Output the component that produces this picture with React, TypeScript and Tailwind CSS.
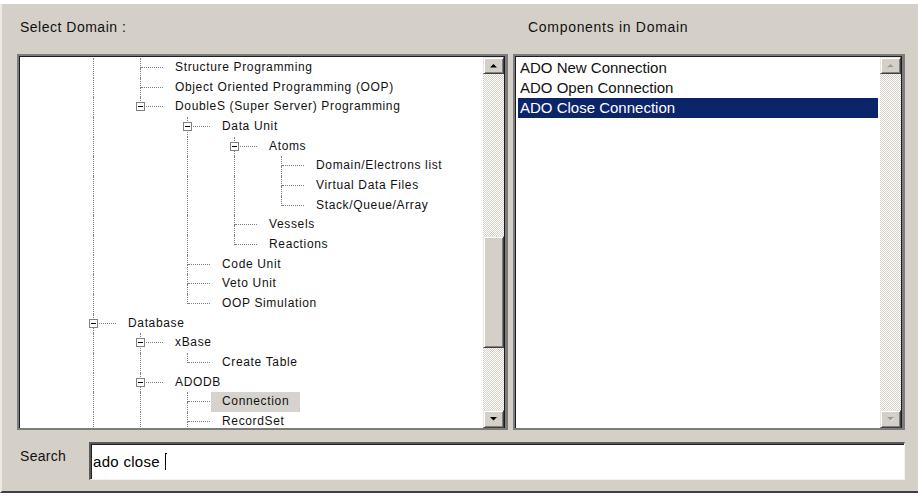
type Row = { t: string; l: number; box?: boolean; sel?: boolean };

const rows: Row[] = [
  { t: 'Structure Programming', l: 1 },
  { t: 'Object Oriented Programming (OOP)', l: 1 },
  { t: 'DoubleS (Super Server) Programming', l: 1, box: true },
  { t: 'Data Unit', l: 2, box: true },
  { t: 'Atoms', l: 3, box: true },
  { t: 'Domain/Electrons list', l: 4 },
  { t: 'Virtual Data Files', l: 4 },
  { t: 'Stack/Queue/Array', l: 4 },
  { t: 'Vessels', l: 3 },
  { t: 'Reactions', l: 3 },
  { t: 'Code Unit', l: 2 },
  { t: 'Veto Unit', l: 2 },
  { t: 'OOP Simulation', l: 2 },
  { t: 'Database', l: 0, box: true },
  { t: 'xBase', l: 1, box: true },
  { t: 'Create Table', l: 2 },
  { t: 'ADODB', l: 1, box: true },
  { t: 'Connection', l: 2, sel: true },
  { t: 'RecordSet', l: 2 },
];

// levels of the nodes that are scrolled out below the view
const levels = [...rows.map((r) => r.l), 2, 1, 0];

function hasNext(i: number, level: number) {
  for (let j = i + 1; j < levels.length; j++) {
    if (levels[j] < level) return false;
    if (levels[j] === level) return true;
  }
  return false;
}

const font = "font-['Liberation_Sans',Arial,sans-serif]";
const checker =
  'bg-[image:repeating-conic-gradient(#ffffff_0_25%,#d4d0c8_0_50%)] bg-[length:2px_2px]';

function Arrow({ up, disabled }: { up?: boolean; disabled?: boolean }) {
  return (
    <div className="flex items-center justify-center bg-[#d4d0c8] border border-t-[#e8e6e2] border-l-[#e8e6e2] border-b-[#404040] border-r-[#404040] shadow-[inset_1px_1px_#ffffff,inset_-1px_-1px_#808080] h-full">
      <svg width="9" height="6" viewBox="0 0 9 6">
        {disabled && (
          <polygon
            points={up ? '2,5 5,2 8,5' : '2,2 8,2 5,5'}
            fill="#ffffff"
          />
        )}
        <polygon
          points={up ? '1,4.5 4.5,1 8,4.5' : '1,1 8,1 4.5,4.5'}
          fill={disabled ? '#9a9893' : '#000000'}
        />
      </svg>
    </div>
  );
}

function TreeRow({ row, i }: { row: Row; i: number }) {
  const cells = [];
  for (let j = 0; j < row.l; j++) {
    cells.push(
      <div key={j} className="relative w-[47px] shrink-0 h-full">
        {hasNext(i, j) && (
          <div className="absolute left-[23px] top-0 bottom-0 border-l border-dotted border-[#808080]" />
        )}
      </div>
    );
  }
  return (
    <div className="flex h-[19.67px] items-stretch">
      {cells}
      <div className="relative w-[47px] shrink-0 h-full">
        <div className="absolute left-[23px] top-0 h-[10px] border-l border-dotted border-[#808080]" />
        {hasNext(i, row.l) && (
          <div className="absolute left-[23px] top-[10px] bottom-0 border-l border-dotted border-[#808080]" />
        )}
        <div className="absolute left-[24px] right-[1px] top-[9px] border-t border-dotted border-[#808080]" />
        {row.box && (
          <div className="absolute left-[19px] top-[5px] w-[9px] h-[9px] border border-[#808080] bg-white">
            <div className="absolute left-[1px] top-[3px] w-[5px] h-px bg-black" />
          </div>
        )}
      </div>
      <div
        className={`pl-[11px] pr-[11px] text-[12px] tracking-[0.65px] leading-[19.67px] whitespace-nowrap text-[#111] ${
          row.sel ? 'bg-[#d6d3ce]' : ''
        }`}
      >
        {row.t}
      </div>
    </div>
  );
}

export default function App() {
  return (
    <div className={`w-[918px] h-[496px] bg-white overflow-hidden ${font}`}>
      <div className="mt-[4px] h-[489px] bg-[#d4d0c8] border-l-2 border-l-[#eceae6] border-b-2 border-b-[#404040] pl-[15px] pr-[13px] flex flex-col">
        {/* labels */}
        <div className="flex h-[50px] text-[14px] leading-4 text-[#111]">
          <div className="w-[491px] pl-[3px] pt-[15px] tracking-[0.5px]">Select Domain :</div>
          <div className="ml-[5px] pl-[15px] pt-[15px] tracking-[0.7px]">Components in Domain</div>
        </div>

        {/* boxes */}
        <div className="flex gap-[5px] h-[376px]">
          <div className="w-[491px] h-full border-2 border-r-[3px] border-[#7c7c7c] flex">
            <div className="flex-1 flex border-t border-l border-r border-[#1e1e1e]">
              <div className="flex-1 bg-white overflow-hidden pl-[50px] pt-[1px]">
                {rows.map((r, i) => (
                  <TreeRow key={i} row={r} i={i} />
                ))}
              </div>
              <div className="w-[21px] flex flex-col">
                <div className="h-[17px]">
                  <Arrow up />
                </div>
                <div className={`flex-1 ${checker}`}>
                  <div className="h-[162px]" />
                  <div className="h-[112px] bg-[#d4d0c8] border border-t-[#e8e6e2] border-l-[#e8e6e2] border-b-[#404040] border-r-[#404040] shadow-[inset_1px_1px_#ffffff,inset_-1px_-1px_#808080]" />
                </div>
                <div className="h-[18px]">
                  <Arrow />
                </div>
              </div>
            </div>
          </div>

          <div className="w-[392px] h-full border-2 border-r-[3px] border-[#7c7c7c] flex">
            <div className="flex-1 flex border-t border-l border-r border-[#1e1e1e]">
              <div className="flex-1 bg-white pt-[1px] text-[15px] leading-[20px]">
                {['ADO New Connection', 'ADO Open Connection', 'ADO Close Connection'].map((t, i) => (
                  <div
                    key={t}
                    className={`ml-[2px] mr-[2px] h-[20px] pl-[2px] whitespace-nowrap ${
                      i === 2 ? 'bg-[#0c246a] text-white' : 'text-[#111]'
                    }`}
                  >
                    {t}
                  </div>
                ))}
              </div>
              <div className="w-[21px] flex flex-col">
                <div className="h-[17px]">
                  <Arrow up disabled />
                </div>
                <div className={`flex-1 ${checker}`} />
                <div className="h-[18px]">
                  <Arrow disabled />
                </div>
              </div>
            </div>
          </div>
        </div>

        {/* search */}
        <div className="flex mt-[12px] h-[38px]">
          <div className="w-[72px] pl-[3px] pt-[6px] text-[14px] leading-4 tracking-[0.3px] text-[#111]">
            Search
          </div>
          <div className="flex-1 bg-white border-t-2 border-l-2 border-t-[#5a5a5a] border-l-[#5a5a5a] border-b border-r border-b-[#f4f4f4] border-r-[#f4f4f4] shadow-[inset_1px_1px_#202020] flex items-center pl-[2px]">
            <span className="text-[15px] leading-5 tracking-[0.3px] text-black">ado close</span>
            <span className="relative ml-[5px] w-px h-[17px] bg-black">
              <span className="absolute left-0 top-0 w-[2px] h-px bg-black" />
            </span>
          </div>
        </div>
      </div>
    </div>
  );
}
